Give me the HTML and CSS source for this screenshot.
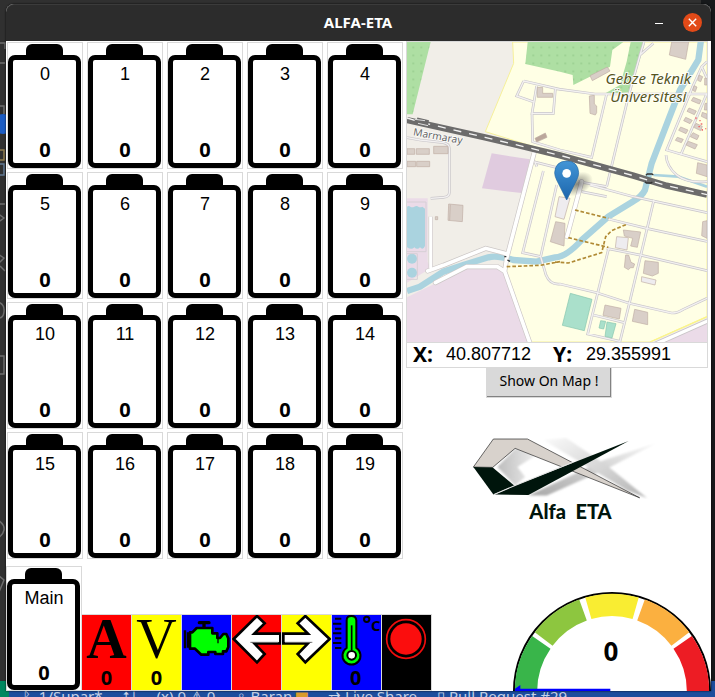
FILE: index.html
```html
<!DOCTYPE html>
<html lang="en">
<head>
<meta charset="utf-8">
<title>ALFA-ETA</title>
<link rel="stylesheet" href="styles.css">
</head>
<body>
<div class="desktop">
<svg class="edge" width="6" height="640" viewBox="0 40 6 640" aria-hidden="true">
<g fill="none" stroke="#6d6d6d" stroke-width="1.5"><path d="M0 43h5v6M0 63h5M0 106h4v8M0 204h5M-3 213l7 5-7 5M-2 254l6 4-6 6M0 266l5 5M-2 302q7 2 6 10t-8 5M0 356h4v18H0M-2 520q7 5 6 10t-6 8M-2 575l6 5-5 12"/><path d="M0 150h4v10H0" stroke="#8d7b4c"/><path d="M0 164h4v11H0" stroke="#627a94"/></g>
<circle cx="3" cy="124" r="10" fill="#1b5cc4"/>
</svg>
<main class="window">
<header class="titlebar">
<h1>ALFA-ETA</h1>
<div class="controls">
<button class="minimize" type="button" aria-label="Minimize"><svg width="8" height="8" viewBox="0 0 8 8"><path d="M0 5.5h8" stroke="#fff"/></svg></button>
<button class="close" type="button" aria-label="Close"><svg width="9" height="9" viewBox="0 0 9 9"><path d="M.8.8l7.4 7.4M8.2.8L.8 8.2" stroke="#fff" stroke-width="1.4"/></svg></button>
</div>
</header>
<div class="upper">
<section class="cells" aria-label="Battery cells">
<div class="battery"><div class="case"><span>0</span><b>0</b></div></div>
<div class="battery"><div class="case"><span>1</span><b>0</b></div></div>
<div class="battery"><div class="case"><span>2</span><b>0</b></div></div>
<div class="battery"><div class="case"><span>3</span><b>0</b></div></div>
<div class="battery"><div class="case"><span>4</span><b>0</b></div></div>
<div class="battery"><div class="case"><span>5</span><b>0</b></div></div>
<div class="battery"><div class="case"><span>6</span><b>0</b></div></div>
<div class="battery"><div class="case"><span>7</span><b>0</b></div></div>
<div class="battery"><div class="case"><span>8</span><b>0</b></div></div>
<div class="battery"><div class="case"><span>9</span><b>0</b></div></div>
<div class="battery"><div class="case"><span>10</span><b>0</b></div></div>
<div class="battery"><div class="case"><span>11</span><b>0</b></div></div>
<div class="battery"><div class="case"><span>12</span><b>0</b></div></div>
<div class="battery"><div class="case"><span>13</span><b>0</b></div></div>
<div class="battery"><div class="case"><span>14</span><b>0</b></div></div>
<div class="battery"><div class="case"><span>15</span><b>0</b></div></div>
<div class="battery"><div class="case"><span>16</span><b>0</b></div></div>
<div class="battery"><div class="case"><span>17</span><b>0</b></div></div>
<div class="battery"><div class="case"><span>18</span><b>0</b></div></div>
<div class="battery"><div class="case"><span>19</span><b>0</b></div></div>
</section>
<aside class="location">
<div class="map-panel">
<svg class="map" viewBox="21 36 900 900" role="img" aria-label="Map of Gebze Teknik Üniversitesi">
<defs>
<pattern id="trees" x="28" y="40" width="24" height="24" patternUnits="userSpaceOnUse"><circle cx="12" cy="12" r="1.6" fill="#5e9e5a"/></pattern>
<radialGradient id="shade"><stop offset="0" stop-color="#333" stop-opacity=".6"/><stop offset="1" stop-color="#333" stop-opacity="0"/></radialGradient>
<linearGradient id="pin" x2="0" y2="1"><stop offset="0" stop-color="#4295d6"/><stop offset="1" stop-color="#1c65ac"/></linearGradient>
<path id="lanes" d="M21 323L60 330L130 338Q148 342 148 355V488Q148 500 130 502L92 505M371 153L480 178M371 153L350 198L404 217M410 168L396 250H460L466 178M396 250L398 335L480 360L575 382L620 192M465 176L585 192H921M732 36L720 75L685 200L620 470M720 75L760 40M400 395L480 415M430 423L368 668L422 680M403 393L411 410M470 465L422 680L438 735Q450 765 480 762L590 788L688 820L815 849Q830 850 850 838L921 805M570 465L700 500L921 548M625 567L740 595L921 634M620 655L725 676L921 722M762 509L688 820L660 934L563 912L626 655M580 855L673 878M545 485L620 500M921 95L905 110L878 170L800 360L921 395M921 190L842 375M798 375Q800 410 830 435T921 455M535 455L620 470M905 110L921 145"/>
<path id="roads" d="M402 370L320 685L314 724L390 940M83 723L130 706L257 655L322 672M106 758L200 710L292 710L314 724M545 455L501 620"/>
</defs>
<path d="M21 36H921V936H21Z" fill="#f1eee8"/>
<path d="M338 36L341 100L256 305L402 350L320 685L314 724L390 936H750L921 860V36Z" fill="#ffffe5" stroke="#f6f09a" stroke-width="3"/>
<path d="M21 36H92L38 253H21ZM383 36L376 102L480 125L518 135L520 165L630 110L637 60L670 36ZM692 36H735L690 187L612 192L660 165L680 95Z" fill="#aedfa3"/>
<path d="M21 36H92L38 253H21ZM383 36L376 102L480 125L518 135L520 165L630 110L637 60L670 36ZM692 36H735L690 187L612 192L660 165L680 95Z" fill="url(#trees)"/>
<path d="M275 370L390 388L365 489L246 475Z" fill="#e0cbdf"/>
<path d="M21 505H83V695L92 715L21 758ZM21 802L110 758L200 712H290L315 735L390 936H21ZM765 936L921 878V936Z" fill="#ebdbe8"/>
<g fill="#aad3df"><path d="M21 530q5-4 10 0t12 0 12 0 12 0l8 6v112q-6 14-15 4-8 9-17 0-8 9-22 0Z"/><circle cx="36" cy="686" r="15"/><circle cx="36" cy="728" r="15"/></g>
<path d="M21 516H78V665H21M21 671H52V748H21" fill="none" stroke="#d6cfd5" stroke-width="3"/>
<path d="M903 30L895 90L840 180L805 270L755 400L735 480Q725 500 700 514L625 560L545 630Q500 680 465 682L410 695L340 690Q290 675 265 682L190 705L130 725L60 770L21 783" fill="none" stroke="#aad3df" stroke-width="19"/>
<path d="M760 435L835 440L921 470" fill="none" stroke="#aad3df" stroke-width="8"/>
<use href="#lanes" fill="none" stroke="#c9c6ca" stroke-width="8"/>
<use href="#lanes" fill="none" stroke="#f3f1f1" stroke-width="4"/>
<path d="M92 560V715" stroke="#cfcaca" stroke-width="13"/>
<use href="#roads" fill="none" stroke="#cbc6c5" stroke-width="15" stroke-linecap="round"/>
<path d="M92 560V715" stroke="#fff" stroke-width="9"/>
<use href="#roads" fill="none" stroke="#fff" stroke-width="11" stroke-linecap="round"/>
<path d="M765 943L925 872" stroke="#c9c5c7" stroke-width="15"/><path d="M765 943L925 872" stroke="#fff" stroke-width="10"/><path d="M750 936L921 860" stroke="#fbf58a" stroke-width="4"/>
<path d="M320 710L420 706L480 695M465 696L505 699L550 685L605 668L617 620L635 602L680 583M525 540L625 565M505 623L625 652" fill="none" stroke="#b08a35" stroke-width="5" stroke-dasharray="11 6"/>
<g fill="#d9cfc8" stroke="#bfaea5" stroke-width="2">
<path d="M412 172H428V190H458V202H412ZM21 356H44V373H21ZM49 356H88V373H49ZM101 349H144V371H101ZM21 394H47V410H21ZM50 394H89V410H50ZM146 522L189 526L187 575L144 571ZM106 560h7v9h-7ZM568 198L583 196V222L590 228V248L586 255L570 250ZM570 137L622 111L630 123L577 152ZM815 36H866L857 88L808 75ZM893 398L921 405V440L889 430ZM467 575L495 580L492 648L451 635ZM670 600L722 606L712 652L692 648L698 625L673 618ZM677 675H686L693 697L704 702L700 713H692L685 719L673 712ZM735 692L775 697V730L757 738L730 730ZM615 825L663 835L658 867L609 856ZM704 838L743 847V884L697 874ZM908 575L921 572V625L905 617Z"/>
<path d="M897 135l11 5-6 15-9-4ZM914 145h7v20h-7ZM882 167l9 4-5 14-8-4ZM880 202l23 9-5 11-24-10ZM867 234l22 9-6 11-22-10ZM907 247l14 5v15l-17-8ZM857 262l20 9-7 10-19-9ZM888 280l19 9-5 13-21-10ZM842 291l22 9-6 11-22-10ZM879 308l18 9-6 12-20-9ZM865 334l27 10-7 13-27-12ZM832 322l18 6-6 10-18-7ZM915 220h6v20h-8Z"/>
<path d="M405 325L436 309L441 322L410 336Z" fill="#bba79b"/>
<path d="M650 620L685 623L681 660L646 653ZM725 740L768 750L765 765L724 755ZM477 500L510 505L492 568L465 560Z" fill="#eeecef"/>
</g>
<path d="M151 524L149 571" stroke="#bfaea5" stroke-width="2"/>
<path d="M511 790L576 808L553 902L487 886ZM602 872L617 874L611 897L597 894ZM621 876L648 881L636 924L615 919Z" fill="#aae0cb" stroke="#86c5ad" stroke-width="2"/>
<path d="M888 262v6M900 270v4M895 290h5M902 282h5M907 297v5M917 298v-3" stroke="#f06c6c" stroke-width="4"/>
<path d="M21 270L255 322L480 376L700 437L800 467L921 494" fill="none" stroke="#6c6b6b" stroke-width="19"/>
<path d="M21 264L60 276L255 322L480 376L700 437L800 467L921 494" fill="none" stroke="#f3f3f3" stroke-width="4" stroke-dasharray="24 24"/>
<path d="M50 272L85 280" stroke="#6c6b6b" stroke-width="19"/><path d="M45 268l30 4M54 280l30 7" stroke="#ddd" stroke-width="3"/>
<path d="M738 436l4-4h14l4 3M735 455l4 4h14l4-3M313 680h6M322 690l8 4" stroke="#333" stroke-width="4" fill="none"/>
<g class="place"><text x="745" y="163" text-anchor="middle">Gebze Teknik</text><text x="745" y="216" text-anchor="middle">Üniversitesi</text></g>
<text class="station" transform="translate(38 316) rotate(10)">Marmaray</text>
<ellipse cx="532" cy="462" rx="50" ry="32" fill="url(#shade)" transform="rotate(-28 532 462)"/>
<path d="M500 510L470 450Q464 438 464 428Q466 394 500 393Q534 394 536 428Q536 438 530 450Z" fill="url(#pin)" stroke="#2367a5" stroke-width="2"/>
<circle cx="500" cy="430" r="13" fill="#fff"/>
</svg>
<div class="coords"><b>X:</b><span>40.807712</span><b>Y:</b><span>29.355991</span></div>
</div>
<button class="show-map" type="button">Show On Map !</button>
<div class="logo">
<svg viewBox="30 35 560 187" role="img" aria-label="Alfa ETA logo">
<defs><linearGradient id="haze" x1="0" x2="1"><stop offset="0" stop-color="#bdbdbd"/><stop offset="1" stop-color="#f3f3f3"/></linearGradient><linearGradient id="haze2" x1="0" y1="1" x2="1" y2="0"><stop offset="0" stop-color="#a8a8a8"/><stop offset="1" stop-color="#f7f7f7"/></linearGradient><linearGradient id="haze3" x1="0" x2="1" y2="1"><stop offset="0" stop-color="#fafafa"/><stop offset="1" stop-color="#b4b4b4"/></linearGradient><filter id="soft"><feGaussianBlur stdDeviation="3"/></filter></defs>
<g filter="url(#soft)">
<path d="M112 125L165 70L240 82L172 125L195 155L165 180Z" fill="url(#haze)"/>
<path d="M205 210L430 105L588 54L435 132L260 210Z" fill="url(#haze2)"/>
<path d="M250 44L318 38L440 120L560 218L500 195Z" fill="url(#haze3)"/>
</g>
<path d="M40 125L100 41H202L538 217L165 69L98 126Z" fill="#d8d2cc" stroke="#222" stroke-width="2"/>
<path d="M104 207L163 181L505 47L205 209Z" fill="#00150c"/>
<path d="M40 125L98 126L163 181L100 207Z" fill="#00150c"/>
<path d="M102 207L163 181L340 110" fill="none" stroke="#e5e5e5" stroke-width="3"/>
</svg>
<p>Alfa&nbsp; ETA</p>
</div>
</aside>
</div>
<div class="lower">
<div class="battery main"><div class="case"><span>Main</span><b>0</b></div></div>
<section class="warnings" aria-label="Warnings">
<div class="warning red"><i class="amp">A</i><b>0</b></div>
<div class="warning yellow"><i class="volt">V</i><b>0</b></div>
<div class="warning blue"><svg viewBox="546 180 147 225" role="img" aria-label="Engine"><g stroke="#000" stroke-width="8" stroke-linejoin="round" fill="#0f0"><path d="M598 203H627M612 203V217" stroke-width="10" stroke-linecap="round"/><path d="M555 226V280M564 232V278" stroke-width="7"/><path d="M570 232H577L590 219H637V235H652V249H660L670 237H679L685 250V276L679 289H669V297H646V291H625V299H604L585 281H570Z"/><path d="M654 252V265" stroke-width="4"/></g></svg></div>
<div class="warning red"><svg viewBox="21 45 147 225" role="img" aria-label="Left signal"><path d="M26 117L96 48L119 70L88 101H166V130H88L119 162L96 187Z" fill="#fff" stroke="#000" stroke-width="8"/><path d="M76 127H160" stroke="#777" stroke-width="3"/></svg></div>
<div class="warning yellow"><svg viewBox="171 45 147 225" role="img" aria-label="Right signal"><path d="M314 117L241 48L218 70L249 101H175V130H249L218 162L241 187Z" fill="#fff" stroke="#000" stroke-width="8"/><path d="M180 127H262" stroke="#777" stroke-width="3"/></svg></div>
<div class="warning blue temp"><svg viewBox="321 45 147 225" role="img" aria-label="Temperature"><path d="M365 61Q365 48 379 48T394 61V144A27 27 0 1 1 365 144Z" fill="#0f0" stroke="#000" stroke-width="6"/><path d="M380 76V150" stroke="#000" stroke-width="5"/><circle cx="380" cy="166" r="13" fill="#fff" stroke="#000" stroke-width="6"/><path d="M330 56H349M324 71H349M330 86H349M324 100H349M330 115H349M324 129H349M330 144H349" stroke="#000" stroke-width="6"/><circle cx="425" cy="58" r="8" fill="none" stroke="#000" stroke-width="6"/><text x="438" y="92" class="unit">C</text></svg><b>0</b></div>
<div class="warning black"><svg viewBox="471 45 147 225" role="img" aria-label="Alarm"><circle cx="543" cy="117" r="58" fill="none" stroke="#f00d0d" stroke-width="5"/><circle cx="543" cy="117" r="47" fill="#fb0d0d"/></svg></div>
</section>
<svg class="gauge" viewBox="0 0 594 297" role="img" aria-label="Speed 0">
<circle cx="297" cy="297" r="294" fill="#fff" stroke="#000" stroke-width="6"/>
<g fill="none" stroke-width="67"><path d="M39 297A258 258 0 0 1 85 151" stroke="#39b54a"/><path d="M92 141A258 258 0 0 1 210 54" stroke="#8dc63f"/><path d="M226 49A258 258 0 0 1 368 49" stroke="#f9ed32"/><path d="M384 54A258 258 0 0 1 502 141" stroke="#fbb040"/><path d="M509 151A258 258 0 0 1 555 297" stroke="#ed1c24"/></g>
<path d="M6 290L22 279V290H292V297H6Z" fill="#00f"/>
<text x="294" y="206" text-anchor="middle">0</text>
</svg>
</div>
</main>
<footer class="taskbar"><span>ᚹ&nbsp; 1/Supar*</span><span>⭡⭣</span><span>(x) 0 ⚠ 0</span><span>♀ Baran <mark>▆</mark></span><span>⇄ Live Share</span><span>▯ Pull Request #29</span></footer>
</div>
</body>
</html>
```
FILE: styles.css
```css
* { box-sizing: border-box; }
body { margin: 0; font-family: "Liberation Sans", Arial, sans-serif; color: #000; }
button { margin: 0; font: inherit; }
.desktop {
  position: relative;
  display: flex;
  flex-direction: column;
  min-height: 100vh;
  padding: 4px 4px 0 6px;
  background: linear-gradient(90deg, #00875f 9px, #1d4d9d 9px) bottom / 100% 16px no-repeat,
    linear-gradient(90deg, #303030 98%, #17191b 98%);
}
.edge { position: absolute; left: 0; top: 40px; }
.window {
  position: relative;
  flex: 1;
  display: flex;
  flex-direction: column;
  background: #fff;
  border-radius: 8px 8px 0 0;
  box-shadow: 0 0 2px #000;
}
.titlebar {
  display: grid;
  grid-template-columns: 1fr auto 1fr;
  align-items: center;
  height: 37px;
  padding: 0 9px 2px 0;
  background: #2c2c2c;
  border-top: 1px solid #3b3b3b;
  border-radius: 8px 8px 0 0;
  color: #fff;
}
.titlebar h1 { grid-column: 2; margin: 0; padding-left: 8px; font: bold 15px/20px "Noto Sans", sans-serif; }
.controls { display: flex; justify-content: flex-end; align-items: center; gap: 15px; }
.controls button { display: flex; align-items: center; justify-content: center; padding: 0; border: 0; color: #fff; background: none; }
.controls .minimize { width: 18px; height: 18px; }
.controls .close { width: 19px; height: 19px; border-radius: 50%; background: #e24a18; }
.upper { display: flex; justify-content: space-between; padding: 0 3px 0 1px; }
.cells { display: grid; grid-template-columns: repeat(5, 76px); gap: 3px 4px; padding-top: 1px; }
.battery {
  display: flex;
  flex-direction: column;
  width: 76px;
  height: 127px;
  padding: 1px 1px 0 0;
  border: 1px solid #d9d9d9;
}
.battery::before { content: ""; width: 37px; height: 11px; margin-left: 18px; background: #000; border-radius: 6px 6px 0 0; }
.case {
  flex: 1;
  display: flex;
  flex-direction: column;
  justify-content: space-between;
  align-items: center;
  padding: 3px 0 1px 1px;
  border: 5px solid #000;
  border-radius: 7px;
}
.case span { font-size: 18px; line-height: 22px; }
.case b, .warning b { font: bold 20px/24px "Noto Sans", sans-serif; }
.location { display: flex; flex-direction: column; align-items: center; width: 302px; }
.map-panel { width: 100%; border: 1px solid #d9d9d9; }
.map { display: block; width: 100%; }
.place { font: italic 45px "Noto Sans", sans-serif; fill: #56561c; stroke: #fff; stroke-width: 5px; paint-order: stroke; }
.station { font: 31px "Noto Sans", sans-serif; fill: #666; stroke: #fff; stroke-width: 4px; paint-order: stroke; }
.coords { display: flex; align-items: center; height: 25px; padding: 0 0 2px 6px; border-top: 1px solid #d9d9d9; font-size: 18px; line-height: 20px; }
.coords b { width: 33px; font: bold 21px/22px "Noto Sans", sans-serif; }
.coords span { width: 107px; }
.coords span:last-child { width: auto; }
.show-map {
  height: 31px;
  margin: -1px 16px 0 0;
  padding: 0 13px 4px;
  border: 1px solid #fff;
  border-color: #f5f5f5 #777 #777 #f5f5f5;
  outline: 1px solid #d9d9d9;
  outline-offset: -1px;
  background: #d9d9d9;
  box-shadow: inset -1px -1px #828282;
  font: 14px "Noto Sans", sans-serif;
}
.logo { width: 187px; margin: 39px 0 0 13px; }
.logo svg { display: block; width: 100%; }
.logo p { margin: 0; padding-left: 14px; font: 900 20px/24px Lato, sans-serif; color: #00150c; text-align: center; }
.lower { display: flex; align-items: flex-end; margin-top: auto; }
.battery.main { height: 125px; }
.battery.main .case { padding-bottom: 0; }
.warnings { display: flex; border-top: 1px solid #d9d9d9; border-bottom: 1px solid #d9d9d9; }
.warning { position: relative; display: flex; flex-direction: column; align-items: center; justify-content: space-between; width: 50px; height: 75px; border-right: 1px solid #d9d9d9; }
.warning svg { display: block; width: 49px; height: 75px; }
.warning i { font: 56px/48px "Liberation Serif", serif; }
.warning .amp { font-weight: bold; }
.temp b { position: absolute; left: 18px; bottom: 0; }
.unit { font: bold 44px "Noto Sans", sans-serif; }
.red { background: #f00; }
.yellow { background: #ff0; }
.blue { background: #00f; }
.black { background: #000; }
.gauge { display: block; width: 198px; margin-left: auto; }
.gauge text { font: bold 78px "Noto Sans", sans-serif; }
.taskbar { display: flex; gap: 20px; height: 6px; padding-left: 16px; overflow: hidden; color: #c5d3e8; font: 15px/10px "Noto Sans", sans-serif; white-space: nowrap; }
.taskbar mark { color: #d99a2b; background: none; }
```
